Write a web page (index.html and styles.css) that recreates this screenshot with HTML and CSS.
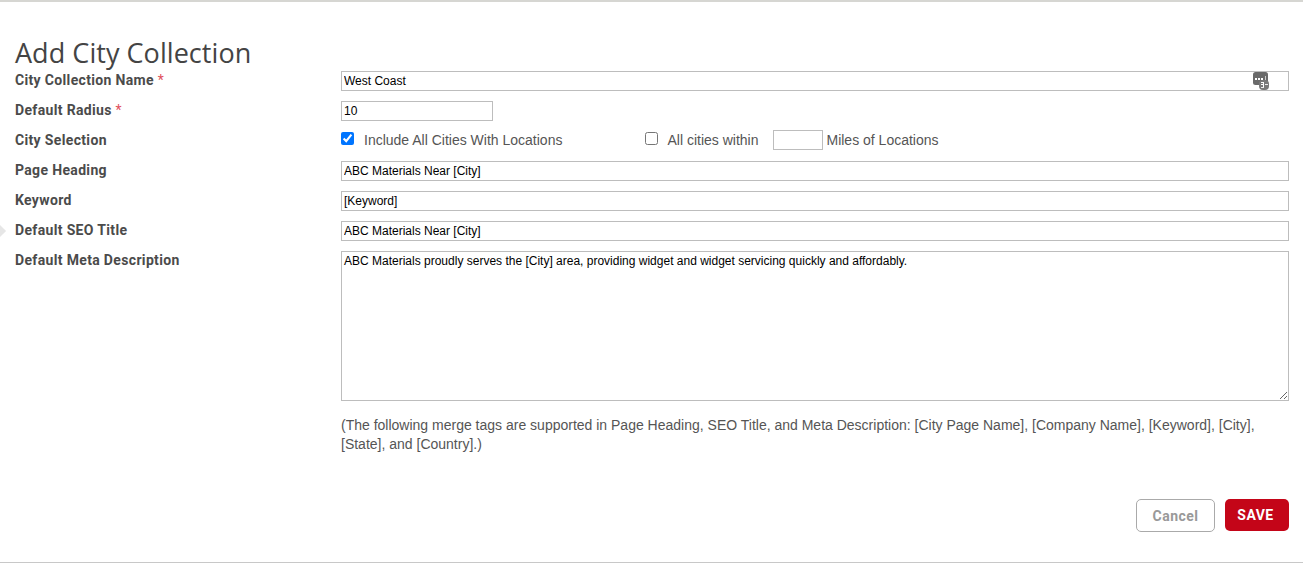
FILE: index.html
```html
<!DOCTYPE html>
<html lang="en">
<head>
<meta charset="utf-8">
<title>Add City Collection</title>
<link rel="stylesheet" href="styles.css">
</head>
<body>
<div class="page">
  <span class="side-marker"></span>
  <h1 class="title">Add City Collection</h1>
  <form class="form">
    <div class="row">
      <label class="label">City Collection Name <span class="req">*</span></label>
      <div class="field field-icon">
        <input class="input" type="text" value="West Coast">
        <svg class="merge-icon" width="17" height="19" viewBox="0 0 17 19" aria-hidden="true">
          <rect x="0" y="0" width="15" height="13" rx="2.5" fill="#6a6a6a"/>
          <rect x="6" y="8" width="10" height="10" rx="4" fill="#7a7a7a"/>
          <rect x="2" y="6" width="2" height="2" fill="#fff"/>
          <rect x="5" y="6" width="2" height="2" fill="#fff"/>
          <rect x="8" y="6" width="2" height="2" fill="#fff"/>
          <rect x="12" y="4" width="1" height="4" fill="#ccc"/>
          <rect x="8" y="10" width="3" height="1" fill="#fff"/>
          <rect x="8" y="12" width="3" height="1" fill="#fff"/>
          <rect x="10" y="10" width="1" height="5" fill="#fff"/>
          <rect x="8" y="15" width="3" height="1" fill="#eee"/>
          <rect x="12" y="12" width="3" height="1" fill="#eee"/>
        </svg>
      </div>
    </div>
    <div class="row">
      <label class="label">Default Radius <span class="req">*</span></label>
      <div class="field"><input class="input input-short" type="text" value="10"></div>
    </div>
    <div class="row">
      <label class="label">City Selection</label>
      <div class="field options">
        <input class="check" type="checkbox" checked>
        <span class="opt-text opt-first">Include All Cities With Locations</span>
        <input class="check check-second" type="checkbox">
        <span class="opt-text opt-second">All cities within</span>
        <input class="input input-miles" type="text">
        <span class="opt-text">Miles of Locations</span>
      </div>
    </div>
    <div class="row">
      <label class="label">Page Heading</label>
      <div class="field"><input class="input" type="text" value="ABC Materials Near [City]"></div>
    </div>
    <div class="row">
      <label class="label">Keyword</label>
      <div class="field"><input class="input" type="text" value="[Keyword]"></div>
    </div>
    <div class="row">
      <label class="label">Default SEO Title</label>
      <div class="field"><input class="input" type="text" value="ABC Materials Near [City]"></div>
    </div>
    <div class="row">
      <label class="label">Default Meta Description</label>
      <div class="field"><textarea class="input textarea">ABC Materials proudly serves the [City] area, providing widget and widget servicing quickly and affordably.</textarea></div>
    </div>
    <div class="row row-note">
      <div></div>
      <p class="note">(The following merge tags are supported in Page Heading, SEO Title, and Meta Description: [City Page Name], [Company Name], [Keyword], [City], [State], and [Country].)</p>
    </div>
    <div class="actions">
      <button class="btn btn-cancel" type="button">Cancel</button>
      <button class="btn btn-save" type="button">SAVE</button>
    </div>
  </form>
</div>
</body>
</html>
```
FILE: styles.css
```css
* { box-sizing: border-box; }
html, body { margin: 0; padding: 0; background: #fff; }
body { font-family: "Liberation Sans", Arial, sans-serif; color: #555; }
.page {
  position: relative;
  height: 563px;
  border-top: 2px solid #d6d6d2;
  border-bottom: 1px solid #c8c8c8;
  margin: 0;
  padding: 0 14px 0 15px;
  overflow: hidden;
}
.side-marker {
  position: absolute;
  left: -6px;
  top: 224px;
  width: 10px;
  height: 10px;
  background: #e6e6e6;
  transform: rotate(45deg);
}
.title {
  margin: 34px 0 0;
  font: 400 27px/34px "Open Sans", sans-serif;
  letter-spacing: 0.05px;
  color: #444;
}
.form { display: flex; flex-direction: column; margin-top: 1px; }
.row {
  display: grid;
  grid-template-columns: 326px 1fr;
  margin-bottom: 10px;
}
.label {
  font: 700 14px/18px Roboto, sans-serif;
  letter-spacing: 0.34px;
  color: #4b4b4b;
}
.req { color: #e0505c; font-weight: 400; }
.field { min-height: 20px; }
.field-icon { position: relative; }
.merge-icon { position: absolute; right: 19px; top: 1px; }
.input {
  display: block;
  width: 100%;
  height: 20px;
  padding: 1px 2px;
  border: 1px solid #bdbdbd;
  border-radius: 0;
  background: #fff;
  font: 12px "Liberation Sans", Arial, sans-serif;
  color: #000;
}
.input-short { width: 152px; }
.input-miles { width: 50px; margin-right: 3px; }
.textarea { height: 150px; padding-top: 2px; resize: vertical; }
.options { display: flex; align-items: center; margin: -1px 0 1px; }
.check { width: 13px; height: 13px; margin: 0 10px 3px 0; accent-color: #0075ff; }
.check-second { margin-right: 9px; }
.opt-text { font-size: 14px; line-height: 18px; color: #555; }
.opt-first { margin-right: 83px; }
.opt-second { margin-right: 15px; }
.row-note { margin: 5px 0 0; }
.note { margin: 0; font-size: 14px; line-height: 19px; color: #555; }
.actions {
  display: flex;
  justify-content: flex-end;
  align-items: flex-start;
  gap: 10px;
  margin-top: 45px;
}
.btn {
  height: 32px;
  padding: 0;
  border-radius: 5px;
  font: 700 14px Roboto, sans-serif;
  letter-spacing: 0.45px;
}
.btn-cancel { width: 79px; height: 33px; padding-top: 1px; background: #fff; border: 1px solid #aaa; color: #999; }
.btn-save { width: 64px; padding-right: 3px; background: #c40518; border: 0; color: #fff; }
```
